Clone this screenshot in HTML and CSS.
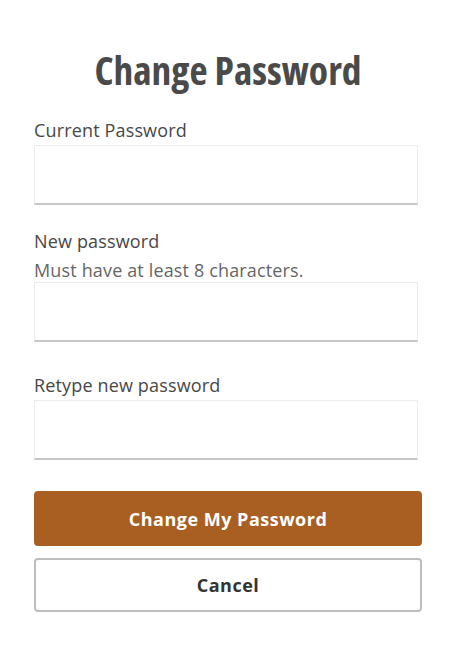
FILE: index.html
```html
<!DOCTYPE html>
<html>
<head>
<meta charset="utf-8">
<link rel="stylesheet" href="styles.css">
</head>
<body>
<main class="page">
  <h1 class="title">Change Password</h1>
  <form class="form">
    <div class="field">
      <label class="label">Current Password</label>
      <input class="input" type="password">
    </div>
    <div class="field field-hinted">
      <label class="label">New password</label>
      <div class="hint">Must have at least 8 characters.</div>
      <input class="input" type="password">
    </div>
    <div class="field field-last">
      <label class="label">Retype new password</label>
      <input class="input" type="password">
    </div>
    <div class="actions">
      <button type="button" class="btn btn-primary">Change My Password</button>
      <button type="button" class="btn btn-secondary">Cancel</button>
    </div>
  </form>
</main>
</body>
</html>
```
FILE: styles.css
```css
html, body {
  margin: 0;
  padding: 0;
  background: #fff;
}
body {
  font-family: "Open Sans", "Liberation Sans", sans-serif;
  color: #444;
}
.page {
  width: 452px;
  padding: 0 30px 0 34px;
  box-sizing: border-box;
}
.title {
  margin: 0;
  padding-top: 44px;
  text-align: center;
  font-size: 39.5px;
  font-weight: 700;
  font-stretch: 75%;
  line-height: 52px;
  color: #4a4a4a;
}
.form {
  display: flex;
  flex-direction: column;
  margin-top: 21px;
}
.field {
  display: flex;
  flex-direction: column;
  margin-bottom: 23px;
}
.field-hinted {
  margin-bottom: 30px;
}
.field-last {
  margin-bottom: 0;
}
.label {
  font-size: 18px;
  line-height: 26px;
  letter-spacing: 0.15px;
  color: #474747;
  margin-bottom: 2px;
}
.hint {
  font-size: 18px;
  line-height: 24px;
  letter-spacing: 0.15px;
  color: #666;
  margin-top: 2px;
}
.input {
  width: 384px;
  height: 60px;
  box-sizing: border-box;
  border: 1px solid #ececec;
  border-bottom: 2px solid #c8c8c8;
  background: #fff;
  margin: 0;
  padding: 0 12px;
  font: inherit;
  outline: none;
}
.actions {
  display: flex;
  flex-direction: column;
  gap: 12px;
  margin-top: 31px;
}
.btn {
  width: 388px;
  box-sizing: border-box;
  font-family: "Open Sans", "Liberation Sans", sans-serif;
  font-size: 18px;
  font-weight: 700;
  letter-spacing: 0.5px;
  border-radius: 4px;
  cursor: pointer;
  margin: 0;
}
.btn-primary {
  height: 55px;
  background: #a95e22;
  color: #fff;
  border: none;
}
.btn-secondary {
  height: 54px;
  background: #fff;
  color: #333;
  border: 2px solid #bdbdbd;
}
```
